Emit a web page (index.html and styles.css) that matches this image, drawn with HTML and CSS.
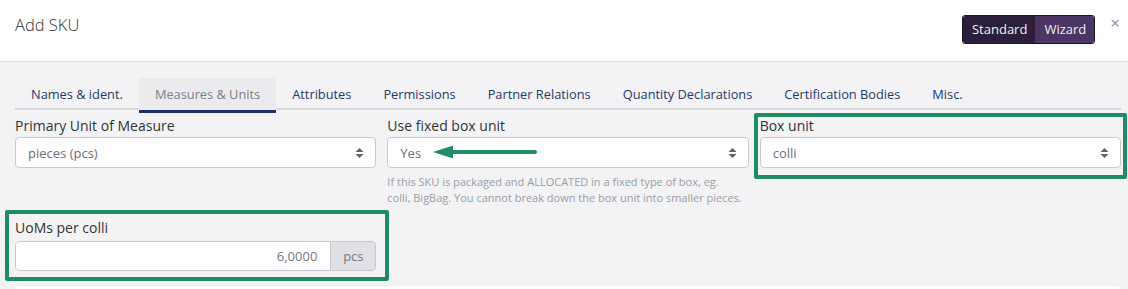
FILE: index.html
```html
<!DOCTYPE html>
<html lang="en">

<head>
    <meta charset="UTF-8">
    <meta name="viewport" content="width=device-width, initial-scale=1.0">
    <title>Add SKU</title>
    <link rel="stylesheet" href="styles.css">
</head>

<body>
    <div class="modal">
        <header class="modal-header">
            <h1 class="modal-title">Add SKU</h1>
            <div class="mode-switch">
                <span class="mode mode-standard">Standard</span>
                <span class="mode mode-wizard">Wizard</span>
            </div>
            <span class="close">&times;</span>
        </header>

        <div class="modal-body">
            <nav class="tabs">
                <a class="tab">Names &amp; ident.</a>
                <a class="tab active">Measures &amp; Units</a>
                <a class="tab">Attributes</a>
                <a class="tab">Permissions</a>
                <a class="tab">Partner Relations</a>
                <a class="tab">Quantity Declarations</a>
                <a class="tab">Certification Bodies</a>
                <a class="tab">Misc.</a>
            </nav>

            <div class="form-grid">
                <div class="field">
                    <label class="label">Primary Unit of Measure</label>
                    <div class="select">
                        <span>pieces (pcs)</span>
                        <svg class="caret" width="9" height="12" viewBox="0 0 9 12"><path d="M4.5 1 L8.5 5 H0.5 Z M4.5 11 L8.5 7 H0.5 Z" fill="#5f6070"/></svg>
                    </div>
                </div>
                <div class="field">
                    <label class="label">Use fixed box unit</label>
                    <div class="select">
                        <span>Yes</span>
                        <svg class="caret" width="9" height="12" viewBox="0 0 9 12"><path d="M4.5 1 L8.5 5 H0.5 Z M4.5 11 L8.5 7 H0.5 Z" fill="#5f6070"/></svg>
                        <svg class="pointer" width="110" height="20" viewBox="0 0 110 20">
                            <line x1="14" y1="10" x2="102" y2="10" stroke="#1f8c66" stroke-width="4" stroke-linecap="round"/>
                            <polygon points="0,10 20,3.5 20,16.5" fill="#1f8c66"/>
                        </svg>
                    </div>
                    <p class="help">If this SKU is packaged and ALLOCATED in a fixed type of box, eg.<br>colli, BigBag. You cannot break down the box unit into smaller pieces.</p>
                </div>
                <div class="field">
                    <span class="mark mark-box"></span>
                    <label class="label">Box unit</label>
                    <div class="select">
                        <span>colli</span>
                        <svg class="caret" width="9" height="12" viewBox="0 0 9 12"><path d="M4.5 1 L8.5 5 H0.5 Z M4.5 11 L8.5 7 H0.5 Z" fill="#5f6070"/></svg>
                    </div>
                </div>

                <div class="field field-second">
                    <span class="mark mark-uom"></span>
                    <label class="label">UoMs per colli</label>
                    <div class="input-group">
                        <span class="input">6,0000</span>
                        <span class="addon">pcs</span>
                    </div>
                </div>
            </div>

            <div class="card"></div>
        </div>
    </div>
</body>

</html>
```

FILE: styles.css
```css
* {
    box-sizing: border-box;
}
body {
    margin: 0;
    font-family: "Open Sans", "Noto Sans", sans-serif;
    background: #f3f3f5;
    color: #333;
    height: 289px;
    overflow: hidden;
}
.modal-header {
    display: flex;
    align-items: flex-start;
    height: 62px;
    background: #fff;
    border-bottom: 1px solid #dcdce0;
    padding: 0 8px 0 15px;
}
.modal-title {
    flex: 1;
    margin: 13px 0 0;
    font-size: 16.5px;
    font-weight: 300;
    line-height: 24px;
    color: #333;
}
.mode-switch {
    display: flex;
    margin-top: 15px;
    border: 1px solid #1f152b;
    border-radius: 3px;
    overflow: hidden;
}
.mode {
    font-size: 13px;
    line-height: 27px;
    color: #f1eef5;
    padding: 0 8px 0 9px;
}
.mode-standard {
    background: #2c1f3e;
}
.mode-wizard {
    background: #4b3563;
}
.close {
    margin: 13px 0 0 15px;
    font-size: 17px;
    line-height: 20px;
    color: #8c8c92;
}

.modal-body {
    padding: 16px 7px 0 15px;
}
.tabs {
    display: flex;
    border-bottom: 2px solid #d6d6db;
    height: 32px;
}
.tab {
    padding: 6px 16px 6px;
    height: 35px;
    font-size: 12.8px;
    line-height: 20px;
    color: #243a68;
    border-radius: 3px 3px 0 0;
    white-space: nowrap;
}
.tab.active {
    background: #ebebee;
    color: #7b7e8c;
    border-bottom: 3px solid #17306a;
}

.form-grid {
    display: grid;
    grid-template-columns: repeat(3, 1fr);
    column-gap: 11px;
    row-gap: 12px;
    padding-top: 6px;
    align-items: start;
}
.field {
    position: relative;
}
.label {
    display: block;
    font-size: 14px;
    line-height: 20px;
    color: #333;
    margin-bottom: 1px;
}
.select {
    position: relative;
    display: flex;
    align-items: center;
    justify-content: space-between;
    height: 31px;
    background: #fff;
    border: 1px solid #c9c9d1;
    border-radius: 4px;
    padding: 0 11px 0 12px;
    font-size: 13px;
    color: #6a6d7c;
}
.pointer {
    position: absolute;
    left: 45px;
    top: 4px;
}
.help {
    margin: 6px 0 0;
    font-size: 11px;
    line-height: 16px;
    color: #9c9ca4;
    white-space: nowrap;
}
.field-second {
    grid-column: 1;
}
.field-second .label {
    margin-bottom: 3px;
}
.input-group {
    display: flex;
    height: 30px;
    border: 1px solid #c9c9d1;
    border-radius: 4px;
    overflow: hidden;
}
.input {
    flex: 1;
    background: #fff;
    text-align: right;
    padding-right: 13px;
    font-size: 13px;
    line-height: 28px;
    color: #747785;
}
.addon {
    width: 45px;
    background: #e1e1e5;
    border-left: 1px solid #c9c9d1;
    text-align: center;
    font-size: 13px;
    line-height: 28px;
    color: #747785;
}

.mark {
    position: absolute;
    border: 4px solid #1f8c66;
    border-radius: 2px;
    pointer-events: none;
}
.mark-box {
    left: -6px;
    right: -6px;
    top: -3px;
    bottom: -11px;
}
.mark-uom {
    left: -10px;
    right: -13px;
    top: -8px;
    bottom: -10px;
}

.card {
    margin-top: 15px;
    height: 4px;
    background: #fff;
    border-radius: 6px 6px 0 0;
}
```
